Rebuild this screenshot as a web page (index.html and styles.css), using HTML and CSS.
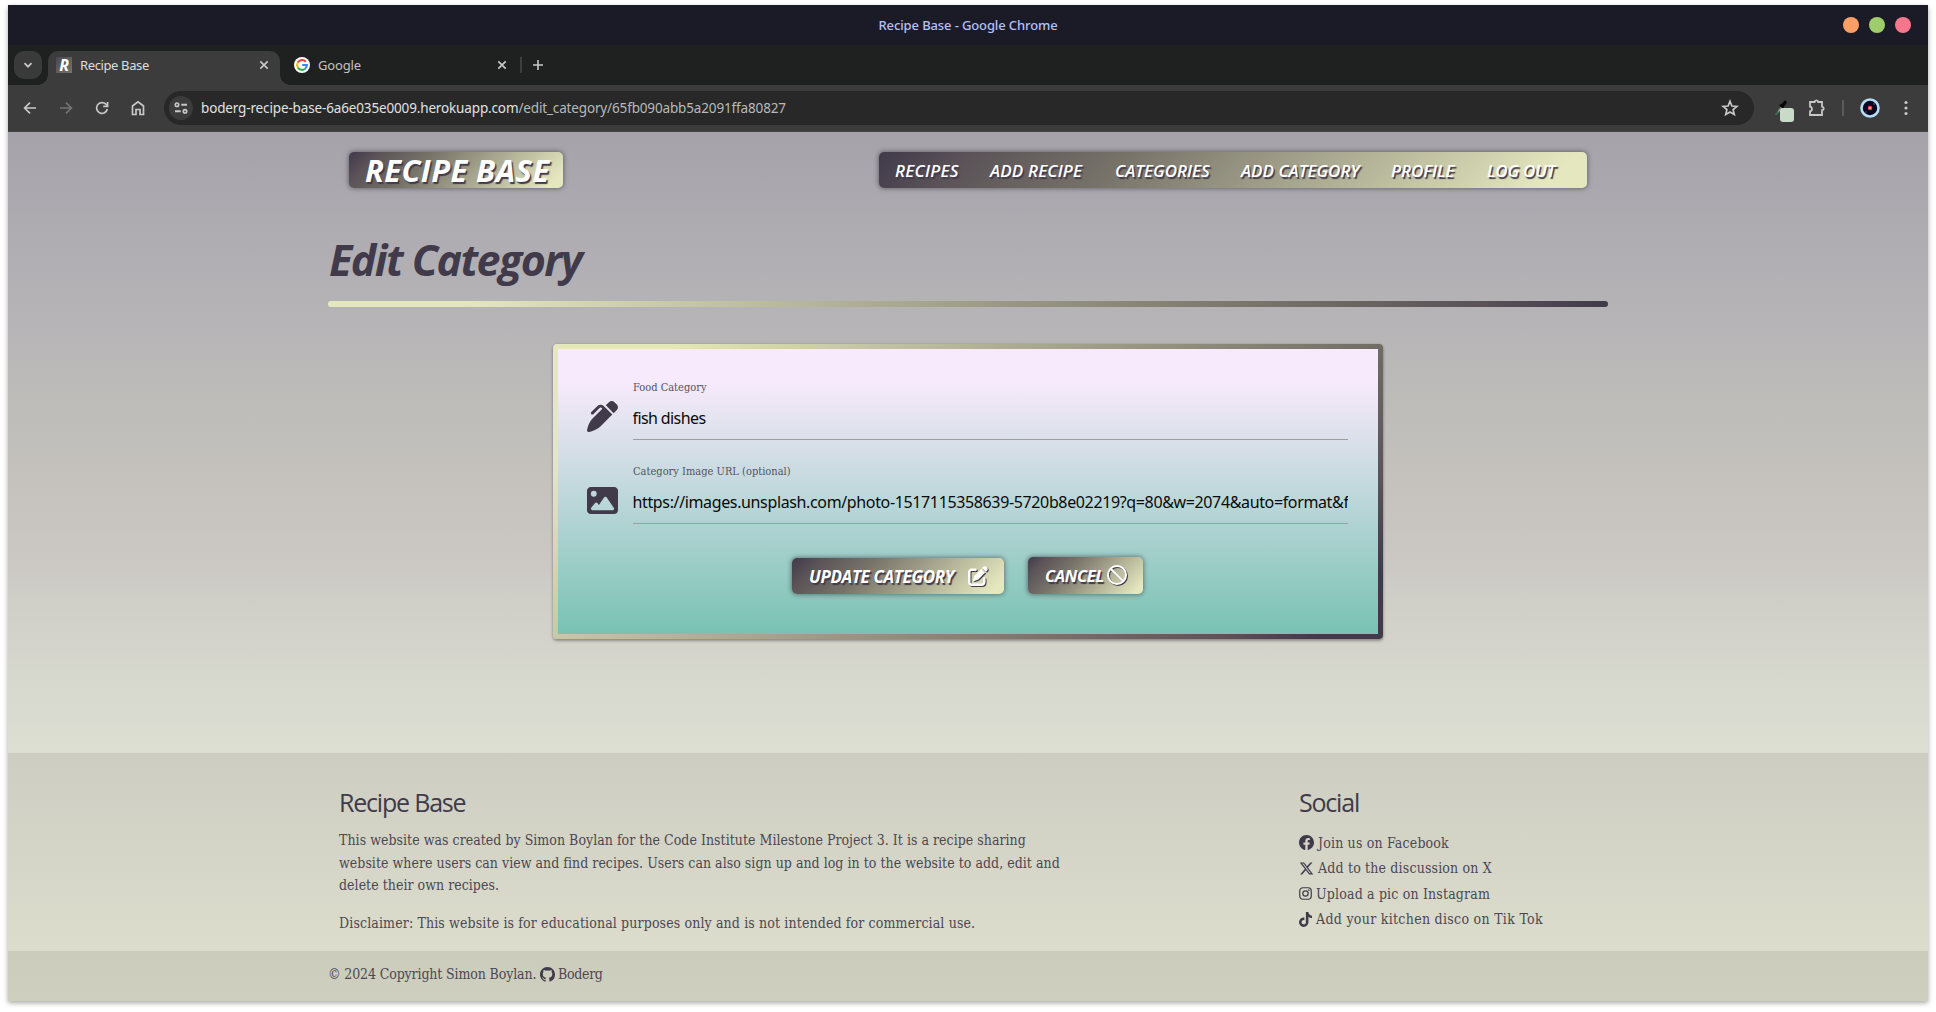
FILE: index.html
```
<!DOCTYPE html>
<html lang="en">
<head>
<meta charset="utf-8">
<title>Recipe Base</title>
<link rel="stylesheet" href="styles.css">
</head>
<body>
<div class="window">
  <div class="titlebar">
    <span class="titlebar-text">Recipe Base - Google Chrome</span>
    <div class="window-buttons"><i class="dot orange"></i><i class="dot green"></i><i class="dot red"></i></div>
  </div>

  <div class="tabstrip">
    <div class="tab-search"><svg width="10" height="10" viewBox="0 0 10 10" class="line"><path d="M1.5 3.2 5 6.7 8.5 3.2" stroke-width="1.8"/></svg></div>
    <div class="tab active">
      <span class="favicon">R</span>
      <span class="tab-title">Recipe Base</span>
      <svg class="line tab-close" width="10" height="10" viewBox="0 0 10 10"><path d="M1.3 1.3 8.7 8.7M8.7 1.3 1.3 8.7" stroke-width="1.7"/></svg>
    </div>
    <div class="tab">
      <svg width="16" height="16" viewBox="0 0 16 16"><circle cx="8" cy="8" r="8" fill="#fff"/><g fill="none" stroke-width="2.1"><path d="M11.7 4.7A4.9 4.9 0 0 0 3.8 5.5" stroke="#ea4335"/><path d="M3.8 5.5A4.9 4.9 0 0 0 3.8 10.5" stroke="#fbbc05"/><path d="M3.8 10.5A4.9 4.9 0 0 0 11.2 11.7" stroke="#34a853"/><path d="M11.2 11.7A4.9 4.9 0 0 0 12.9 8H8.2" stroke="#4285f4"/></g></svg>
      <span class="tab-title dim">Google</span>
      <svg class="line tab-close" width="10" height="10" viewBox="0 0 10 10"><path d="M1.3 1.3 8.7 8.7M8.7 1.3 1.3 8.7" stroke-width="1.7"/></svg>
    </div>
    <i class="tab-sep"></i>
    <svg class="line new-tab" width="12" height="12" viewBox="0 0 12 12"><path d="M6 1v10M1 6h10" stroke-width="1.6"/></svg>
  </div>

  <div class="toolbar">
    <div class="nav-icons">
      <svg class="line" width="14" height="14" viewBox="0 0 14 14"><path d="M13 7H1.8M7 1.6 1.6 7 7 12.4" stroke-width="1.7"/></svg>
      <svg class="line muted" width="14" height="14" viewBox="0 0 14 14"><path d="M1 7h11.2M7 1.6 12.4 7 7 12.4" stroke-width="1.7"/></svg>
      <svg class="line" width="14" height="14" viewBox="0 0 14 14"><path d="M12.3 8A5.4 5.4 0 1 1 10.9 3.2L12.2 4.6" stroke-width="1.7"/><path d="M12.6 1v4.4H8.2" stroke-width="1.7"/></svg>
      <svg class="line" width="14" height="16" viewBox="0 0 14 16"><path d="M1.5 14.5V6L7 1.8 12.5 6v8.500H9V9.500H5v5z" stroke-width="1.7"/></svg>
    </div>
    <div class="omnibox">
      <span class="site-info"><svg class="line" width="14" height="12" viewBox="0 0 14 12"><circle cx="3" cy="2.700" r="1.700" stroke-width="1.700"/><path d="M7.300 2.700H13M1 9.300h5.700" stroke-width="1.900"/><circle cx="11" cy="9.300" r="1.700" stroke-width="1.700"/></svg></span>
      <span class="url">boderg-recipe-base-6a6e035e0009.herokuapp.com<span class="path">/edit_category/65fb090abb5a2091ffa80827</span></span>
      <svg class="line" width="18" height="18" viewBox="0 0 18 18"><path d="M9 2.300 10.900 7l5 .4-3.800 3.200 1.200 4.900L9 12.900l-4.300 2.600 1.200-4.900L2.100 7.400l5-.4z" stroke-width="1.700" stroke-linejoin="miter"/></svg>
    </div>
    <div class="extensions">
      <svg width="20" height="22" viewBox="0 0 20 22"><path d="M1 14.500 7 6.500l1.600 1.400L2.400 15z" fill="#87908a"/><path d="M1 14.500 3.500 11l1 1-2.400 3.300z" fill="#1e6b3c"/><path d="M6.200 5.600 10 1.200c1.200-1.400 3.700.3 2.500 2L9 7.800z" fill="#050505"/><path d="m5.500 4.800 4 3.600" stroke="#050505" stroke-width="1.500"/><rect x="6" y="8" width="14" height="14" rx="3" fill="#c8dac8"/></svg>
      <svg class="line puzzle" width="18" height="18" viewBox="0 0 18 18"><path d="M2 3h4.600c.2-2.300 3.400-2.300 3.600 0H14v4.600c2.300.2 2.300 3.400 0 3.600V16H2v-3.700c2.600-.4 2.600-4.200 0-4.600z" stroke-width="1.800"/></svg>
      <i class="tool-sep"></i>
      <svg width="20" height="20" viewBox="0 0 20 20"><circle cx="10" cy="10" r="8.500" fill="#0b0720" stroke="#b4dcf5" stroke-width="2.600"/><circle cx="14" cy="6" r="1" fill="#45405c"/><circle cx="6" cy="14" r="1" fill="#39334f"/><circle cx="10" cy="10" r="2.300" fill="#ef3f63"/><circle cx="10" cy="10" r="1.100" fill="#ffc36b"/></svg>
      <svg class="menu" width="4" height="16" viewBox="0 0 4 16" fill="#c7c7c7"><circle cx="2" cy="2.500" r="1.600"/><circle cx="2" cy="8" r="1.600"/><circle cx="2" cy="13.500" r="1.600"/></svg>
    </div>
  </div>

  <main class="page">
    <div class="container">
      <header class="site-header">
        <a class="plate brand">RECIPE BASE</a>
        <nav class="plate site-nav">
          <a class="n1">RECIPES</a><a class="n2">ADD RECIPE</a><a class="n3">CATEGORIES</a><a class="n4">ADD CATEGORY</a><a class="n5">PROFILE</a><a class="n6">LOG OUT</a>
        </nav>
      </header>
      <h1>Edit Category</h1>
      <div class="rule"></div>
      <div class="card">
        <form class="card-body">
          <div class="field">
            <svg width="31" height="31" viewBox="0 0 512 512" fill="#403a4a"><path d="M453.300 19.300l39.400 39.400c25 25 25 65.500 0 90.500l-52.100 52.100-1-1-16-16-96-96-17-17 52.100-52.100c25-25 65.500-25 90.500 0zM241 114.900c-9.400-9.400-24.600-9.400-33.900 0L105 217c-9.400 9.400-24.600 9.400-33.900 0s-9.400-24.600 0-33.900L173.100 81c28.100-28.100 73.700-28.100 101.800 0L288 94.100l17 17 96 96 17 17-17 17L229.500 412.500C181.500 460.500 120.300 492.700 53.700 506L28.700 511C20.800 512.600 12.700 510.100 7 504.400S-.6 490.600.9 482.700l5-25C19.300 391.100 51.500 329.900 99.500 281.900L254.100 128z"/></svg>
            <div class="control">
              <label for="name">Food Category</label>
              <input id="name" class="short" type="text" value="fish dishes">
            </div>
          </div>
          <div class="field">
            <svg width="31" height="31" viewBox="0 0 512 512" fill="#403a4a"><path d="M0 96C0 60.700 28.700 32 64 32H448c35.300 0 64 28.700 64 64V416c0 35.300-28.700 64-64 64H64c-35.300 0-64-28.700-64-64V96zM323.800 202.500c-4.500-6.600-11.900-10.500-19.800-10.500s-15.400 3.900-19.800 10.500l-87 127.600L170.700 297c-4.600-5.700-11.500-9-18.700-9s-14.200 3.300-18.700 9l-64 80c-5.800 7.200-6.900 17.100-2.900 25.400s12.400 13.600 21.600 13.600H424c8.900 0 17.100-4.900 21.200-12.800s3.600-17.400-1.400-24.700l-120-176zM112 192a48 48 0 1 0 0-96 48 48 0 1 0 0 96z"/></svg>
            <div class="control">
              <label for="image">Category Image URL (optional)</label>
              <input id="image" type="text" value="https://images.unsplash.com/photo-1517115358639-5720b8e02219?q=80&amp;w=2074&amp;auto=format&amp;f">
            </div>
          </div>
          <div class="actions">
            <a class="plate button update"><span>UPDATE CATEGORY</span><svg width="20" height="20" viewBox="0 0 512 512" fill="#fff"><path d="M471.600 21.700c-21.900-21.900-57.300-21.900-79.200 0L362.300 51.700l97.900 97.900 30.100-30.100c21.900-21.900 21.900-57.300 0-79.200L471.600 21.700zm-299.200 220c-6.100 6.100-10.800 13.600-13.500 21.900l-29.600 88.800c-2.900 8.600-.6 18.100 5.800 24.600s15.900 8.700 24.600 5.800l88.800-29.600c8.200-2.700 15.700-7.400 21.900-13.500L437.700 172.300 339.700 74.300 172.400 241.700zM96 64C43 64 0 107 0 160V416c0 53 43 96 96 96H352c53 0 96-43 96-96V320c0-17.700-14.300-32-32-32s-32 14.300-32 32v96c0 17.700-14.300 32-32 32H96c-17.700 0-32-14.300-32-32V160c0-17.700 14.300-32 32-32h96c17.700 0 32-14.300 32-32s-14.300-32-32-32H96z"/></svg></a>
            <a class="plate button cancel"><span>CANCEL</span><svg width="20" height="20" viewBox="0 0 20 20" fill="none" stroke="#fff" stroke-width="2"><circle cx="10" cy="10" r="9"/><path d="M3.700 3.700 16.300 16.300"/></svg></a>
          </div>
        </form>
      </div>
    </div>
  </main>

  <footer>
    <div class="footer-main">
      <div class="container footer-cols">
        <section class="about">
          <h2>Recipe Base</h2>
          <p>This website was created by Simon Boylan for the Code Institute Milestone Project 3. It is a recipe sharing<br>website where users can view and find recipes. Users can also sign up and log in to the website to add, edit and<br>delete their own recipes.</p>
          <p class="disclaimer">Disclaimer: This website is for educational purposes only and is not intended for commercial use.</p>
        </section>
        <section class="social">
          <h2>Social</h2>
          <ul>
            <li><svg width="15" height="15" viewBox="0 0 16 16"><path d="M16 8.049c0-4.446-3.582-8.050-8-8.050C3.580 0-.002 3.603-.002 8.050c0 4.017 2.926 7.347 6.750 7.951v-5.625h-2.030V8.050H6.750V6.275c0-2.017 1.195-3.131 3.022-3.131.876 0 1.791.157 1.791.157v1.980h-1.009c-.993 0-1.303.621-1.303 1.258v1.510h2.218l-.354 2.326H9.250V16c3.824-.604 6.750-3.934 6.750-7.951z"/></svg><span class="s1">Join us on Facebook</span></li>
            <li><svg width="15" height="15" viewBox="0 0 512 512"><path d="M389.200 48h70.600L305.600 224.200 487 464H345L233.700 318.600 106.500 464H35.800L200.700 275.500 26.800 48H172.400L272.900 180.900 389.200 48zM364.400 421.800h39.100L151.100 88h-42L364.400 421.800z"/></svg><span class="s1">Add to the discussion on X</span></li>
            <li><svg class="outline" width="13" height="13" viewBox="0 0 14 14"><rect x=".8" y=".8" width="12.400" height="12.400" rx="3.400"/><circle cx="7" cy="7" r="2.900"/><circle cx="10.600" cy="3.400" r=".25"/></svg><span class="s1">Upload a pic on Instagram</span></li>
            <li><svg width="13" height="15" viewBox="0 0 448 512"><path d="M448,209.910a210.060,210.060,0,0,1-122.770-39.250V349.380A162.550,162.550,0,1,1,185,188.310V278.200a74.620,74.620,0,1,0,52.230,71.180V0l88,0a121.180,121.180,0,0,0,1.860,22.170h0A122.180,122.180,0,0,0,381,102.390a121.430,121.430,0,0,0,67,20.140Z"/></svg><span class="s4">Add your kitchen disco on Tik Tok</span></li>
          </ul>
        </section>
      </div>
    </div>
    <div class="copyright">
      <div class="container copyright-row">
        <span class="c1">© 2024 Copyright Simon Boylan.</span>
        <svg width="15" height="15" viewBox="0 0 16 16"><path d="M8 0C3.580 0 0 3.580 0 8c0 3.540 2.290 6.530 5.470 7.590.4.070.55-.17.55-.38 0-.19-.01-.82-.01-1.490-2.010.37-2.530-.49-2.690-.94-.09-.23-.48-.94-.82-1.130-.28-.15-.68-.52-.01-.53.63-.01 1.080.58 1.230.82.72 1.210 1.870.87 2.330.66.07-.52.28-.87.51-1.070-1.780-.2-3.640-.89-3.640-3.950 0-.87.31-1.590.82-2.150-.08-.2-.36-1.020.08-2.120 0 0 .67-.21 2.200.82.64-.18 1.320-.27 2-.27s1.360.09 2 .27c1.530-1.040 2.200-.82 2.200-.82.44 1.100.16 1.920.08 2.120.51.56.82 1.270.82 2.150 0 3.070-1.870 3.750-3.650 3.950.29.25.54.73.54 1.480 0 1.070-.01 1.930-.01 2.200 0 .21.15.46.55.38A8.010 8.010 0 0 0 16 8c0-4.420-3.580-8-8-8z"/></svg>
        <span class="c2">Boderg</span>
      </div>
    </div>
  </footer>
</div>
</body>
</html>
```
FILE: styles.css
```
* { box-sizing: border-box; }
body { margin: 0; background: #fff; font-family: "Noto Sans", sans-serif; overflow: hidden; }
svg { display: block; flex: none; }
.line { fill: none; stroke: #c7c7c7; }
.line.muted { stroke: #737373; }
a { white-space: nowrap; }

.window { width: 1920px; height: 996px; margin: 5px 8px 11px; box-shadow: 0 2px 5px rgba(0, 0, 0, .35); display: flex; flex-direction: column; }

/* browser chrome */
.titlebar { height: 40px; background: #1b1b27; display: grid; grid-template-columns: 1fr auto 1fr; align-items: center; }
.titlebar-text { grid-column: 2; font-size: 13px; font-weight: 500; letter-spacing: -.12px; color: #b4c0fa; }
.window-buttons { display: flex; justify-content: flex-end; gap: 10px; padding-right: 17px; }
.dot { width: 16px; height: 16px; border-radius: 50%; }
.orange { background: #ff9e64; }
.green { background: #9ece6a; }
.red { background: #f7768e; }

.tabstrip { height: 40px; background: #1f2120; display: flex; padding: 6px 0 0 6px; }
.tab-search { width: 28px; height: 28px; border-radius: 10px; background: #3a3a3a; display: flex; align-items: center; justify-content: center; margin-right: 6px; }
.tab { width: 232px; height: 34px; display: flex; align-items: center; padding: 0 11px 6px 8px; position: relative; }
.tab + .tab { width: 237px; padding: 0 10px 6px 14px; }
.tab.active { background: #3c3c3c; border-radius: 10px 10px 0 0; }
.tab.active::before, .tab.active::after { content: ""; position: absolute; bottom: 0; width: 10px; height: 10px; }
.tab.active::before { left: -10px; background: radial-gradient(circle at 0 0, transparent 9.500px, #3c3c3c 10px); }
.tab.active::after { right: -10px; background: radial-gradient(circle at 100% 0, transparent 9.500px, #3c3c3c 10px); }
.favicon { width: 16px; height: 16px; background: linear-gradient(135deg, #4a4652, #777468); color: #fff; font: italic 700 16px/16px "Open Sans", sans-serif; text-align: center; }
.tab-title { font-size: 13px; letter-spacing: -.38px; color: #dcdcdc; margin-left: 8px; }
.tab-title.dim { color: #c3c3c3; letter-spacing: -.15px; }
.tab-close { margin-left: auto; }
.tab-sep { width: 2px; height: 16px; background: #3d3f3e; margin: 6px 10px 0 3px; }
.new-tab { margin-top: 8px; }

.toolbar { height: 47px; background: linear-gradient(#3c3c3c, #3c3c3c); border-bottom: 1px solid #454347; display: flex; align-items: center; padding: 0 20px 0 15px; }
.nav-icons { display: flex; align-items: center; gap: 22px; width: 141px; }
.omnibox { width: 1590px; height: 34px; border-radius: 17px; background: #282828; display: flex; align-items: center; padding: 0 15px 0 5px; }
.site-info { width: 24px; height: 24px; border-radius: 50%; background: #3c3c3c; display: flex; align-items: center; justify-content: center; }
.url { flex: 1; margin-left: 8px; font-size: 13.500px; letter-spacing: -.145px; color: #e1e1e1; }
.path { color: #b9b9b9; }
.extensions { display: flex; align-items: center; flex: 1; padding-left: 20px; }
.extensions .puzzle { margin: 0 16px 0 14px; }
.extensions > svg:first-child { margin-top: 6px; }
.tool-sep { width: 2px; height: 16px; background: #5b5b5b; margin-right: 16px; }
.menu { margin-left: auto; }

/* site */
.page { height: 621px; background: linear-gradient(#a5a2aa, #adabb0 14%, #b7b5b7 32%, #bdbcb9 43%, #c4c1bc 54%, #ccc9c5 70%, #d0d0c8 77%, #dddfd3); }
.container { width: 1280px; margin: 0 auto; }
.plate { background: linear-gradient(135deg, #403a4b, #5a5257 12%, #777369 34%, #e5e8bf 94%); border-radius: 5px; box-shadow: 0 0 4px 1px rgba(50, 46, 58, .5); color: #fff; font-family: "Open Sans", sans-serif; font-style: italic; font-weight: 700; text-shadow: 1.500px 1.500px 1px #403a4b; height: 36px; line-height: 36px; }
.site-header { display: flex; justify-content: space-between; padding: 20px 21px 0 21px; }
.brand { width: 214px; padding-left: 16px; font-size: 31px; letter-spacing: .4px; }
.site-nav { width: 708px; padding-left: 16px; display: flex; font-size: 17px; font-weight: 650; line-height: 37px; }
.site-nav .n1 { width: 95px; letter-spacing: .25px; }
.site-nav .n2 { width: 125px; letter-spacing: .15px; }
.site-nav .n3 { width: 126px; }
.site-nav .n4 { width: 150px; }
.site-nav .n5 { width: 96px; }
.site-nav .n6 { letter-spacing: -.2px; }

h1 { margin: 42px 0 0; height: 60px; font: italic 700 43px/60px "Open Sans", sans-serif; letter-spacing: -1.550px; color: #403a4a; padding-left: 1px; }
.rule { margin-top: 11px; height: 6px; border-radius: 3px; background: linear-gradient(90deg, #e5e8bf 10%, #777369 73%, #5a5257 90%, #403a4b); }

.card { width: 830px; height: 295px; margin: 37px auto 0; padding: 5px; border-radius: 4px; background: linear-gradient(135deg, #e5e8bf 10%, #777369 70%, #5a5257 86%, #403a4b 94%); box-shadow: 0 2px 3px rgba(0, 0, 0, .3), 0 0 3px rgba(0, 0, 0, .15); }
.card-body { height: 285px; padding: 30px 30px 0 29px; background: linear-gradient(#f7eafc, #f7eafc 11%, #dae0ea 32%, #78c2b3); }
.field { display: flex; gap: 15px; height: 61px; margin-bottom: 23px; }
.field > svg { margin-top: 22px; }
.control { flex: 1; display: flex; flex-direction: column; margin-left: -1px; padding-left: 1px; }
label { height: 17px; font: 11px/18px "DejaVu Serif Condensed", "DejaVu Serif", serif; color: #57525f; }
input { height: 44px; width: 100%; border: 0; border-bottom: 1px solid #9e9e9e; padding: 0; background: transparent; font: 16px "Noto Sans", sans-serif; letter-spacing: -.363px; color: #0a0a0a; outline: 0; text-indent: -.5px; }
input.short { letter-spacing: -.6px; }
.actions { display: flex; gap: 24px; align-items: flex-end; height: 47px; padding-left: 205px; }
.button { display: flex; align-items: center; font-size: 17px; }
.button svg { filter: drop-shadow(1.500px 1.500px .5px #403a4b); }
.update { width: 212px; padding-left: 17px; letter-spacing: -.350px; line-height: 37px; }
.update span { width: 159px; }
.cancel { width: 115px; height: 37px; padding-left: 17px; letter-spacing: -.3px; font-size: 16.500px; line-height: 38px; }
.cancel span { width: 62px; }
.cancel svg { margin-top: -1px; }

/* footer */
footer { color: #4c4753; font: 14px/22.500px "DejaVu Serif Condensed", "DejaVu Serif", serif; }
footer svg { fill: #403a4a; }
footer svg.outline { fill: none; stroke: #403a4a; stroke-width: 1.300; }
.footer-main { height: 198px; background: linear-gradient(#cdcdc2, #dcddcc); }
.footer-cols { display: flex; padding: 31px 0 0 11px; }
.about { width: 960px; }
h2 { margin: 0 0 6px; height: 37px; font: 400 25px/37px "Open Sans", sans-serif; letter-spacing: -1.200px; color: #403a4a; }
.about h2 { margin-bottom: 8px; }
p { margin: 0 0 15px; white-space: nowrap; letter-spacing: .03px; }
.disclaimer { letter-spacing: .13px; }
ul { list-style: none; margin: 0; padding: 3px 0 0; }
li { display: flex; align-items: center; gap: 4px; height: 25.500px; white-space: nowrap; }
.s1 { letter-spacing: .17px; }
.s4 { letter-spacing: .3px; }
.copyright { height: 50px; background: linear-gradient(#cbccbb, #cecfbe); }
.copyright-row { display: flex; align-items: center; height: 46px; }
.c1 { width: 212px; white-space: nowrap; letter-spacing: -.130px; }
.c2 { margin-left: 3px; letter-spacing: -.3px; }
```
